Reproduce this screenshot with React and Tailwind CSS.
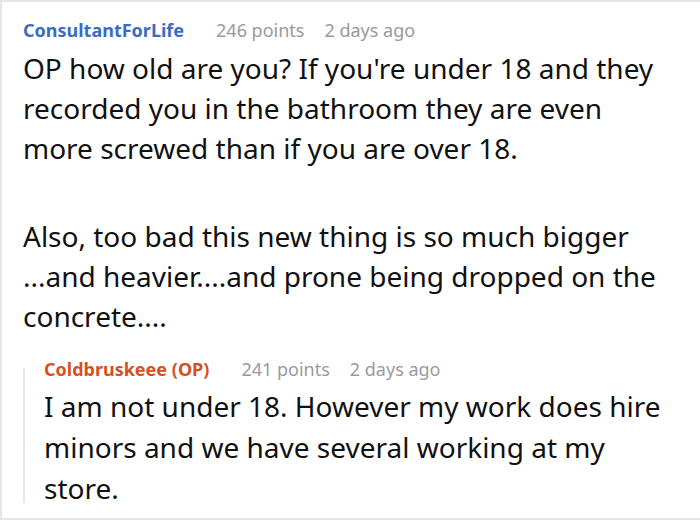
import React from 'react';

const Meta = ({ name, color, points, age }) => (
  <div className="flex items-baseline text-[18px] leading-[24px]">
    <span className={`font-bold ${color}`}>{name}</span>
    <span className="ml-[32px] text-[#9a9a9a]">{points}</span>
    <span className="ml-[20px] text-[#9a9a9a]">{age}</span>
  </div>
);

export default function App() {
  return (
    <div
      className="w-[700px] h-[520px] bg-white border-2 border-r-0 border-[#e6e6e6] overflow-hidden text-[#111]"
      style={{ fontFamily: '"Noto Sans", "Open Sans", sans-serif' }}
    >
      <div className="pl-[21px] pt-[16px] pr-[28px]">
        <Meta name="ConsultantForLife" color="text-[#3a6cbf]" points="246 points" age="2 days ago" />
        <div className="text-[28px] leading-[40px] mt-[6px]">
          <p>OP how old are you? If you're under 18 and they recorded you in the bathroom they are even more screwed than if you are over 18.</p>
          <p className="mt-[48px]">Also, too bad this new thing is so much bigger ...and heavier....and prone being dropped on the concrete....</p>
        </div>

        <div className="mt-[21px] flex">
          <div className="w-[2px] shrink-0 bg-[#e6e6e6] mt-[11px] mb-[6px]" />
          <div className="pl-[19px] -mr-[12px]">
            <Meta name="Coldbruskeee (OP)" color="text-[#d4511f]" points="241 points" age="2 days ago" />
            <p className="text-[28px] leading-[41px] mt-[5px]">
              I am not under 18. However my work does hire minors and we have several working at my store.
            </p>
          </div>
        </div>
      </div>
    </div>
  );
}
